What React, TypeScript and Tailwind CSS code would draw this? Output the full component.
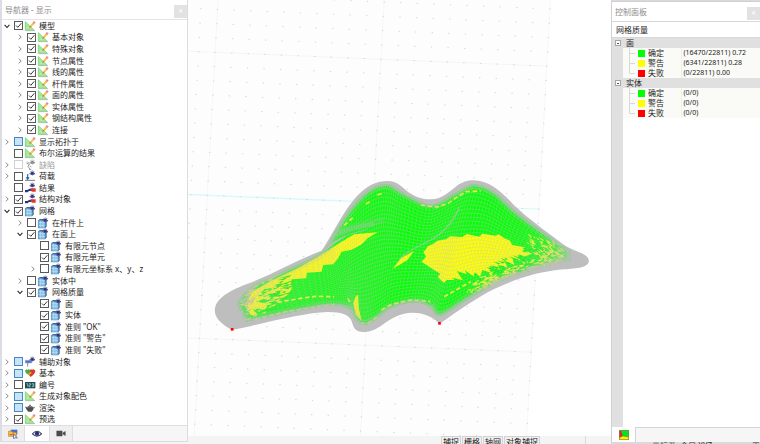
import { useState } from "react";
import clsx from "clsx";

type IconName =
  | "model"
  | "defect"
  | "load"
  | "result"
  | "mesh"
  | "guide"
  | "basic"
  | "number"
  | "render";

type Item = {
  label: string;
  level: number;
  icon: IconName;
  state: "on" | "off" | "mixed" | "disabled";
  arrow?: "open" | "closed";
};

const items: Item[] = [
  { label: "模型", level: 0, icon: "model", state: "on", arrow: "open" },
  { label: "基本对象", level: 1, icon: "model", state: "on", arrow: "closed" },
  { label: "特殊对象", level: 1, icon: "model", state: "on", arrow: "closed" },
  { label: "节点属性", level: 1, icon: "model", state: "on", arrow: "closed" },
  { label: "线的属性", level: 1, icon: "model", state: "on", arrow: "closed" },
  { label: "杆件属性", level: 1, icon: "model", state: "on", arrow: "closed" },
  { label: "面的属性", level: 1, icon: "model", state: "on", arrow: "closed" },
  { label: "实体属性", level: 1, icon: "model", state: "on", arrow: "closed" },
  { label: "钢结构属性", level: 1, icon: "model", state: "on", arrow: "closed" },
  { label: "连接", level: 1, icon: "model", state: "on", arrow: "closed" },
  { label: "显示拓扑于", level: 0, icon: "model", state: "mixed", arrow: "closed" },
  { label: "布尔运算的结果", level: 0, icon: "model", state: "off" },
  { label: "缺陷", level: 0, icon: "defect", state: "disabled", arrow: "closed" },
  { label: "荷载", level: 0, icon: "load", state: "off", arrow: "closed" },
  { label: "结果", level: 0, icon: "result", state: "off" },
  { label: "结构对象", level: 0, icon: "result", state: "on", arrow: "closed" },
  { label: "网格", level: 0, icon: "mesh", state: "on", arrow: "open" },
  { label: "在杆件上", level: 1, icon: "mesh", state: "off", arrow: "closed" },
  { label: "在面上", level: 1, icon: "mesh", state: "on", arrow: "open" },
  { label: "有限元节点", level: 2, icon: "mesh", state: "off" },
  { label: "有限元单元", level: 2, icon: "mesh", state: "on" },
  { label: "有限元坐标系 x、y、z", level: 2, icon: "mesh", state: "off", arrow: "closed" },
  { label: "实体中", level: 1, icon: "mesh", state: "off", arrow: "closed" },
  { label: "网格质量", level: 1, icon: "mesh", state: "on", arrow: "open" },
  { label: "面", level: 2, icon: "mesh", state: "on" },
  { label: "实体", level: 2, icon: "mesh", state: "on" },
  { label: '准则 "OK"', level: 2, icon: "mesh", state: "on" },
  { label: '准则 "警告"', level: 2, icon: "mesh", state: "on" },
  { label: '准则 "失败"', level: 2, icon: "mesh", state: "on" },
  { label: "辅助对象", level: 0, icon: "guide", state: "mixed", arrow: "closed" },
  { label: "基本", level: 0, icon: "basic", state: "mixed", arrow: "closed" },
  { label: "编号", level: 0, icon: "number", state: "off", arrow: "closed" },
  { label: "生成对象配色", level: 0, icon: "model", state: "mixed", arrow: "closed" },
  { label: "渲染", level: 0, icon: "render", state: "mixed", arrow: "closed" },
  { label: "预选", level: 0, icon: "model", state: "on", arrow: "closed" },
];

const quality = [
  {
    name: "面",
    rows: [
      { label: "确定", color: "bg-[#00ff00]", value: "(16470/22811) 0.72" },
      { label: "警告", color: "bg-[#ffff00]", value: "(6341/22811) 0.28" },
      { label: "失败", color: "bg-[#ff0000]", value: "(0/22811) 0.00" },
    ],
  },
  {
    name: "实体",
    rows: [
      { label: "确定", color: "bg-[#00ff00]", value: "(0/0)" },
      { label: "警告", color: "bg-[#ffff00]", value: "(0/0)" },
      { label: "失败", color: "bg-[#ff0000]", value: "(0/0)" },
    ],
  },
];

const indent = ["pl-0", "pl-[13px]", "pl-[26px]"];

/** Small eye that sits on the corner of most display icons */
function EyeMark({ color = "#2c2f78" }: { color?: string }) {
  return (
    <g>
      <path d="M14 8Q22 -1 30 8Q22 16 14 8Z" fill="#c9c9e6" stroke={color} strokeWidth="2" />
      <circle cx="22" cy="7" r="4" fill={color} />
      <path d="M16 2Q22 -2 28 2" stroke={color} strokeWidth="1.5" fill="none" />
    </g>
  );
}

function TreeIcon({ name }: { name: IconName }) {
  return (
    <svg viewBox="0 0 30 30" className="h-[10px] w-[10px] shrink-0 overflow-visible" aria-hidden>
      {name === "model" && (
        <>
          <path d="M1 2V28H28Z" fill="#a5ea9c" stroke="#6ccb6a" strokeWidth="2" />
          <path d="M7 16V23H15Z" fill="#e2fadd" stroke="#7dd47c" />
          <path d="M1 29H30" stroke="#aab2aa" strokeWidth="2" />
          <path d="M13 20L15 14L24 4L29 8L19 18Z" fill="#f6c444" />
          <path d="M13 20L15 14L19 18Z" fill="#a06a30" />
          <path d="M23 5L26 0L32 4L28 9Z" fill="#e08a9a" />
        </>
      )}
      {name === "defect" && (
        <>
          <path d="M7 5L13 12L9 19L15 28M4 9L10 12M12 28H19M14 17L19 21" stroke="#9a9a9a" strokeWidth="3" fill="none" />
          <EyeMark color="#8a8a8a" />
        </>
      )}
      {name === "load" && (
        <>
          <path d="M8 9V22" stroke="#3478c8" strokeWidth="4" />
          <path d="M2 19L8 28L14 19Z" fill="#245fb0" />
          <path d="M0 28H30" stroke="#333" strokeWidth="2" />
          <EyeMark />
        </>
      )}
      {name === "result" && (
        <>
          <path d="M0 21H8L14 17H22V24H12L8 28H0Z" fill="#26409c" />
          <path d="M17 16H32V26H22L17 23Z" fill="#d83a2e" />
          <path d="M0 24L16 20" stroke="#1b1f55" strokeWidth="2" />
          <EyeMark />
        </>
      )}
      {name === "mesh" && (
        <>
          <path d="M1 7L6 3H26V25L22 30H1Z" fill="#386a98" />
          <rect x="1" y="7" width="21" height="23" fill="#7db9e2" />
          <path d="M1 14H22M1 22H22M8 7V30M15 7V30" stroke="#d6effc" strokeWidth="1.5" />
          <path d="M1 7H22V30H1Z" fill="none" stroke="#4f82ae" strokeWidth="1.5" />
          <EyeMark />
        </>
      )}
      {name === "guide" && (
        <>
          <path d="M1 10H20V18H1Z" fill="#6d8fd8" stroke="#4b66b0" />
          <path d="M8 18V29M4 14H17" stroke="#46546e" strokeWidth="2" />
          <EyeMark />
        </>
      )}
      {name === "basic" && (
        <>
          <path d="M13 9Q16 2 21 5Q28 2 31 9Q30 18 17 27L9 18Z" fill="#d7382d" />
          <path d="M0 9Q1 3 7 5Q13 1 16 8L11 21L3 15Z" fill="#48ad3f" />
          <path d="M12 14L18 11L20 15L13 22L9 18Z" fill="#f29b24" />
        </>
      )}
      {name === "number" && (
        <>
          <rect x="0" y="6" width="31" height="19" fill="#234b52" />
          <path d="M4 11H8V20M12 11H17V15H12V20H17M21 11H26V20H21M22 15H26" stroke="#9fe4dc" strokeWidth="2" fill="none" />
        </>
      )}
      {name === "render" && (
        <>
          <path d="M7 11Q15 5 23 11Q27 18 20 26H10L5 20L0 11H4L7 15Z" fill="#4e4e4e" />
          <path d="M13 5H17V9H13Z" fill="#4e4e4e" />
          <path d="M23 13H29L22 22" stroke="#4e4e4e" strokeWidth="2" fill="none" />
          <path d="M10 12Q15 9 20 12" stroke="#a8a8a8" strokeWidth="2" fill="none" />
        </>
      )}
    </svg>
  );
}

function TreeRow({ item, id }: { item: Item; id: string }) {
  const [checked, setChecked] = useState(item.state === "on");
  return (
    <li className={clsx("flex min-h-0 flex-1 items-center", indent[item.level])}>
      <button
        type="button"
        aria-label={`展开 ${item.label}`}
        className={clsx("flex h-2 w-[10px] shrink-0 items-center justify-center", !item.arrow && "invisible")}
      >
        <svg viewBox="0 0 10 10" className="h-[6px] w-[6px]" fill="none" aria-hidden>
          {item.arrow === "open" ? (
            <path d="M1 3L5 7.500L9 3" stroke="#222" strokeWidth="1.8" />
          ) : (
            <path d="M3 1L7 5L3 9" stroke="#777" strokeWidth="1.5" />
          )}
        </svg>
      </button>
      <span className="ml-[2px] grid shrink-0">
        <input
          id={id}
          type="checkbox"
          checked={checked}
          disabled={item.state === "disabled"}
          onChange={(e) => setChecked(e.target.checked)}
          className={clsx(
            "peer col-start-1 row-start-1 h-[9px] w-[9px] appearance-none border",
            item.state === "mixed" && "border-[#4589c0] bg-[#c5e3f9]",
            item.state === "disabled" && "border-[#d0d0d0] bg-white",
            (item.state === "on" || item.state === "off") && "border-[#5a5a5a] bg-white",
          )}
        />
        <svg
          viewBox="0 0 9 9"
          className="pointer-events-none invisible col-start-1 row-start-1 h-[9px] w-[9px] peer-checked:visible"
          aria-hidden
        >
          <path d="M2 4.500L3.800 6.300L7.300 2.300" fill="none" stroke="#222" strokeWidth="0.900" />
        </svg>
      </span>
      <label htmlFor={id} className="ml-[2px] flex items-center gap-1 whitespace-nowrap">
        <TreeIcon name={item.icon} />
        <span className={item.state === "disabled" ? "text-[#9b9b9b]" : "text-[#1c1c1c]"}>{item.label}</span>
      </label>
    </li>
  );
}

function PanelTitle({ title }: { title: string }) {
  return (
    <header className="flex h-[19px] shrink-0 items-center justify-between bg-white pl-[3px] text-[#8c8c8c]">
      <h2>{title}</h2>
      <button
        type="button"
        aria-label="关闭"
        className="mt-[3px] flex h-[13px] w-[13px] items-center justify-center bg-[#e2e2e2] text-white"
      >
        ×
      </button>
    </header>
  );
}

function Navigator() {
  return (
    <aside className="flex w-[188px] shrink-0 flex-col border-b border-l-2 border-r border-[#dcdce4] bg-white">
      <PanelTitle title="导航器 - 显示" />
      <ul className="flex min-h-0 flex-1 flex-col border-t border-[#e4e4e8]">
        {items.map((item, i) => (
          <TreeRow key={i} item={item} id={`nav-${i}`} />
        ))}
      </ul>
      <nav className="flex h-4 shrink-0 border-t border-[#dedee2] bg-[#f6f6f6]">
        <button type="button" aria-label="数据" className="flex w-[23px] items-center justify-center border-r border-[#dedee2] bg-[#efefef]">
          <svg viewBox="0 0 30 30" className="h-[10px] w-[10px]" aria-hidden>
            <path d="M8 2H28V16H8Z" fill="#3c73d2" />
            <path d="M1 7H12L14 10H25V22H1Z" fill="#f8bf3e" stroke="#a66c1c" strokeWidth="1.500" />
            <path d="M16 14L28 27L21 26L17 29Z" fill="#fff" stroke="#24419d" strokeWidth="2" />
            <path d="M5 17H14" stroke="#d6453d" strokeWidth="3" />
          </svg>
        </button>
        <button type="button" aria-label="显示" className="flex w-6 items-center justify-center bg-white">
          <svg viewBox="0 0 28 20" className="h-[7px] w-[10px]" aria-hidden>
            <path d="M1 11Q14 -4 27 11Q14 24 1 11Z" fill="#fff" stroke="#353a68" strokeWidth="3" />
            <circle cx="14" cy="10" r="6" fill="#272b70" />
          </svg>
        </button>
        <button type="button" aria-label="视图" className="flex w-6 items-center justify-center border-x border-[#dedee2] bg-[#efefef]">
          <svg viewBox="0 0 28 20" className="h-[7px] w-[10px]" aria-hidden>
            <path d="M1 2H18V18H1ZM19 8L27 3V17L19 12Z" fill="#4b4b4b" />
          </svg>
        </button>
      </nav>
    </aside>
  );
}

/* ---------- model view ---------- */

type Pt = [number, number];

const topEdge: Pt[] = [
  [148, 908], [190, 862], [280, 818], [402, 757], [440, 700], [490, 625], [545, 570], [600, 553],
  [650, 580], [730, 613], [800, 580], [858, 553], [920, 576], [985, 635], [1065, 695], [1150, 755],
];
const bottomEdge: Pt[] = [
  [175, 965], [230, 954], [320, 935], [420, 917], [480, 925], [505, 960], [530, 974], [560, 962],
  [610, 925], [680, 907], [725, 920], [756, 948], [830, 905], [900, 864], [990, 824], [1150, 780],
];

const silhouette =
  "M134 990C100 972 82 952 82 932C82 895 130 870 185 850C260 820 330 780 402 752C430 715 460 645 500 598C535 555 570 543 600 543C630 543 640 560 665 578C690 594 710 598 730 598C765 597 785 575 805 560C825 545 840 541 858 541C900 541 935 570 965 600C1000 640 1070 690 1130 735C1160 755 1204 760 1204 782C1204 802 1170 805 1130 808C1050 815 990 835 920 867C860 897 810 935 756 971C735 950 710 938 675 938C640 938 610 955 580 978C555 994 540 996 530 996C500 996 498 980 492 962C485 945 465 936 420 936C350 938 250 965 134 990Z";

const leftWarning =
  "M170 915L195 875L245 845L330 805L400 765L460 727L500 703L570 697L540 715L520 735L490 750L462 755L452 775L437 793L407 795L402 815L358 818L356 835L312 838L312 868L300 885L270 904L256 893L282 878L225 883L275 862L232 866L210 888L240 892L205 905L250 912L195 928L210 943L190 946L180 930Z";
const rightWarning =
  "M708 757L722 738L738 731L750 722L776 718L788 709L824 711L838 702L876 710L884 701L925 707L934 703L950 715L968 722L974 735L1012 742L1005 755L1036 760L1010 770L990 765L999 782L975 774L980 794L952 784L960 803L930 795L938 810L905 800L912 824L885 810L878 830L862 817L858 829L832 811L838 823L808 813L826 841L795 833L801 840L778 840L769 848L751 831L758 821L740 810L702 785L716 770Z";

// deterministic noise so the mesh looks the same on every render
function random(seed: number) {
  let s = seed;
  return () => {
    s = (s * 16807) % 2147483647;
    return s / 2147483647;
  };
}

function along(edge: Pt[], t: number): Pt {
  const f = t * (edge.length - 1);
  const i = Math.min(Math.floor(f), edge.length - 2);
  const u = f - i;
  const p0 = edge[Math.max(i - 1, 0)];
  const p1 = edge[i];
  const p2 = edge[i + 1];
  const p3 = edge[Math.min(i + 2, edge.length - 1)];
  const mix = (k: 0 | 1) =>
    0.5 *
    (2 * p1[k] +
      (p2[k] - p0[k]) * u +
      (2 * p0[k] - 5 * p1[k] + 4 * p2[k] - p3[k]) * u * u +
      (3 * p1[k] - p0[k] - 3 * p2[k] + p3[k]) * u * u * u);
  return [mix(0), mix(1)];
}

function surface(u: number, v: number): Pt {
  const a = along(topEdge, u);
  const b = along(bottomEdge, u);
  return [a[0] + (b[0] - a[0]) * v, a[1] + (b[1] - a[1]) * v];
}

function toPath(pts: Pt[]) {
  return "M" + pts.map((p) => `${p[0].toFixed(1)} ${p[1].toFixed(1)}`).join("L");
}

function range(n: number) {
  return Array.from({ length: n + 1 }, (_, i) => i / n);
}

const COLS = 105;
const ROWS = 32;
const steps = range(COLS);
const patch = toPath([...steps.map((u) => surface(u, 0)), ...steps.map((u) => surface(1 - u, 1))]) + "Z";
const rowLines = range(ROWS).map((v) => toPath(steps.map((u) => surface(u, v)))).join("");
const columnLines = steps.map((u) => toPath([surface(u, 0), surface(u, 1)])).join("");
const diagonals = steps
  .map((u) => toPath(range(16).map((v) => surface(Math.min(u + v * 0.16, 1), v))))
  .join("");

function streaks(seed: number, count: number, from: Pt, to: Pt, spread: number, slope: number, size: number) {
  const rnd = random(seed);
  let d = "";
  for (let i = 0; i < count; i++) {
    const t = rnd();
    const x = from[0] + (to[0] - from[0]) * t + (rnd() - 0.5) * spread * 0.5;
    const y = from[1] + (to[1] - from[1]) * t + (rnd() - 0.5) * spread;
    const w = size * (0.5 + rnd());
    d += `M${x.toFixed(1)} ${y.toFixed(1)}l${w.toFixed(1)} ${(w * slope).toFixed(1)}l${(-w * 0.3).toFixed(1)} ${(5 - w * slope * 0.3).toFixed(1)}z`;
  }
  return d;
}

const greenLeft = streaks(11, 45, [215, 915], [290, 850], 60, -0.28, 28);
const yellowLeft = streaks(23, 110, [175, 925], [250, 860], 85, -0.35, 16);
const greenRight = streaks(37, 70, [875, 825], [1075, 745], 55, 0.3, 22);
const yellowRight = streaks(51, 230, [835, 868], [1115, 765], 44, -0.35, 12);
const yellowTip = streaks(67, 70, [1020, 730], [1115, 755], 60, 0.55, 13);
const greyRight = streaks(71, 140, [910, 850], [1120, 788], 24, -0.4, 13);
const greyLeft = streaks(83, 60, [162, 930], [185, 875], 50, -0.7, 10);

function BackgroundGrid() {
  const at = (i: number, j: number): Pt => [83 + i * 49.75 - j * 2.35, 157 + i * 2.07 + j * 42.9];
  const dots: Pt[] = [];
  for (let j = -4; j <= 27; j++) {
    for (let i = -2; i <= 20; i++) dots.push(at(i, j));
  }
  return (
    <g>
      <path d={toPath([at(-3, -5), at(20, -5), at(20, 28), at(-3, 28)]) + "Z"} fill="#fdfdfd" />
      {[0, 10, 20].map((n) => (
        <g key={n} fill="none" strokeWidth="2">
          <path d={toPath([at(n, -5), at(n, 28)])} stroke="#f3f3f3" />
          <path d={toPath([at(-3, n), at(20, n)])} stroke={n === 10 ? "#d7fafa" : "#f1f1f1"} strokeWidth={n === 10 ? 4 : 2} />
        </g>
      ))}
      {dots.map(([x, y], i) => (
        <rect key={i} x={x - 2} y={y - 1.5} width="4" height="3" fill="#d5d5d5" />
      ))}
    </g>
  );
}

function ModelView() {
  return (
    <svg
      viewBox="0 0 1272 1308"
      preserveAspectRatio="xMidYMid slice"
      className="min-h-0 w-full flex-1 bg-white"
      role="img"
      aria-label="网格质量"
    >
      <defs>
        <clipPath id="surface-clip">
          <path d={patch} />
        </clipPath>
        <clipPath id="outline-clip">
          <path d={silhouette} />
        </clipPath>
      </defs>
      <BackgroundGrid />
      <path d={silhouette} fill="#bebebe" />
      <g clipPath="url(#outline-clip)">
        <path d={patch} fill="#00ff00" />
        <g clipPath="url(#surface-clip)">
          <path d={leftWarning} fill="#ffff00" />
          <path d={rightWarning} fill="#ffff00" />
          <path d={greenLeft + greenRight} fill="#00f000" />
          <path d={yellowLeft + yellowRight + yellowTip} fill="#f8f42c" />
          <path d={greyRight + greyLeft} fill="#c6c19a" />
          {/* warning cells spread along the edges */}
          <path
            d="M478 892L490 904L484 907ZM512 884L514 925L522 962L504 944L497 910L505 888ZM616 806L640 775L680 752L660 780Z"
            fill="#ffff00"
          />
          <path
            d="M270 907L340 895L385 889L440 890M582 930L610 914L670 900L728 904M700 615L750 621L782 610L804 594L835 575L880 573M470 676L500 650M535 612L552 603M570 585L590 578M640 565L668 591M520 970L540 971L570 950M205 958L300 934L440 914M770 890L850 845"
            stroke="#f8f42c"
            strokeWidth="5"
            strokeDasharray="13 8"
            fill="none"
          />
          <g fill="none" stroke="#c3c9c0">
            <path d={rowLines} strokeWidth="1.3" opacity="0.75" />
            <path d={columnLines} strokeWidth="1.2" opacity="0.65" />
            <path d={diagonals} strokeWidth="1.1" opacity="0.45" />
          </g>
          <path d="M815 625Q795 665 770 690T695 738T635 782" fill="none" stroke="#c0c0c0" strokeWidth="4" opacity="0.6" />
          <path d="M405 757Q440 705 550 686L480 706L430 738Z" fill="#bebebe" opacity="0.9" />
          <path d="M430 715Q470 685 560 672" fill="none" stroke="#bebebe" strokeWidth="14" opacity="0.3" />
          <path d="M455 700Q500 675 590 660" fill="none" stroke="#bebebe" strokeWidth="22" opacity="0.18" />
          <path d={patch} fill="none" stroke="#bebebe" strokeWidth="12" opacity="0.7" />
          <path d={patch} fill="none" stroke="#bebebe" strokeWidth="30" opacity="0.4" strokeDasharray="4 3" />
        </g>
      </g>
      <rect x="130" y="984" width="8" height="8" fill="#ff0000" />
      <rect x="752" y="966" width="8" height="8" fill="#ff0000" />
    </svg>
  );
}

function ControlPanel() {
  return (
    <aside className="flex w-[149px] shrink-0 flex-col bg-[#dadada] pt-px">
      <div className="flex min-h-0 flex-1 flex-col border-l border-t border-[#cfcfd4] bg-white">
        <PanelTitle title="控制面板" />
        <h3 className="flex h-[17px] shrink-0 items-center border-y border-[#d8d8dc] pl-1 text-[#1c1c1c]">网格质量</h3>
        <div className="flex min-h-0 flex-1">
          <div className="w-full border-l-[11px] border-[#e0e0e0]">
            <table className="-ml-[11px] w-[calc(100%+11px)] table-fixed border-collapse leading-[10px] text-[#1c1c1c]">
              <colgroup>
                <col className="w-[69px]" />
                <col />
              </colgroup>
              {quality.map((group) => (
                <tbody key={group.name}>
                  <tr className="h-[10px] bg-[#e0e0e0]">
                    <th colSpan={2} className="p-0 text-left font-normal">
                      <span className="flex h-[10px] items-center gap-[5px] pl-[3px]">
                        <button type="button" aria-label="折叠" className="flex h-[6px] w-[6px] items-center justify-center border border-[#a5a5a5] bg-white">
                          <span className="h-px w-[2px] bg-[#555]" />
                        </button>
                        {group.name}
                      </span>
                    </th>
                  </tr>
                  {group.rows.map((row, i) => (
                    <tr key={row.label} className="h-[10px]">
                      <td className="border-r border-[#eeeeea] p-0">
                        <span className="flex h-[10px] items-center">
                          <span className="h-[10px] w-[11px] shrink-0 bg-[#e0e0e0]" />
                          <span className="flex h-[10px] flex-1 items-center bg-[#fafaf6] pl-[6px]">
                            <svg viewBox="0 0 7 10" className="h-[10px] w-[7px]" aria-hidden>
                              <path d={i === 2 ? "M0.5 0V5.5H6" : "M0.5 0V10M0.5 5.5H6"} fill="none" stroke="#d8d8d8" />
                            </svg>
                            <span className={clsx("ml-[2px] h-[7px] w-[7px]", row.color)} />
                            <span className="ml-[3px]">{row.label}</span>
                          </span>
                        </span>
                      </td>
                      <td className="whitespace-nowrap bg-[#fafaf6] p-0 pl-[2px] text-[7px] leading-[10px]">{row.value}</td>
                    </tr>
                  ))}
                </tbody>
              ))}
            </table>
          </div>
        </div>
        <nav className="flex h-[15px] shrink-0 bg-[#f6f6f6]">
          <button type="button" aria-label="颜色比例" className="flex w-6 items-center justify-center border-r border-[#d4d4da] bg-white">
            <svg viewBox="0 0 30 30" className="h-[10px] w-[10px]" aria-hidden>
              <rect width="30" height="30" fill="#00e51d" />
              <path d="M0 0H5L11 18L0 24Z" fill="#f01e32" />
              <path d="M0 24L11 18L30 21V30H0Z" fill="#fff000" />
              <path d="M5 0L11 18L30 21M11 18L0 24" stroke="#77702a" strokeWidth="1.500" fill="none" />
              <rect x="1" y="1" width="28" height="28" fill="none" stroke="#858a45" strokeWidth="2" />
            </svg>
          </button>
          <span className="flex-1 border-t border-[#d4d4da]" />
        </nav>
      </div>
      <footer className="flex h-[2px] shrink-0 justify-between overflow-hidden pl-[41px] leading-[8px] text-[#333]">
        <span className="whitespace-nowrap">坐标系: 全局 XYZ</span>
        <span>平</span>
      </footer>
    </aside>
  );
}

export default function App() {
  return (
    <div className="flex h-screen overflow-hidden bg-[#f4f4f4] font-['Noto_Sans','Noto_Sans_CJK_SC',sans-serif] text-[8px] leading-[10px]">
      <div className="flex shrink-0 pb-[2px]">
        <Navigator />
      </div>
      <main className="flex min-w-0 flex-1 flex-col">
        <ModelView />
        <footer className="flex h-2 shrink-0 items-start justify-end gap-px overflow-hidden bg-[#f4f4f4] pr-[25px]">
          {["捕捉", "栅格", "轴网", "对象捕捉"].map((label) => (
            <button
              key={label}
              type="button"
              className="shrink-0 border border-[#d2d2d2] bg-[#f0f0f0] px-px leading-[10px] text-[#222]"
            >
              {label}
            </button>
          ))}
          <span className="ml-[44px] h-2 w-px bg-[#dcdcdc]" />
        </footer>
      </main>
      <ControlPanel />
    </div>
  );
}
